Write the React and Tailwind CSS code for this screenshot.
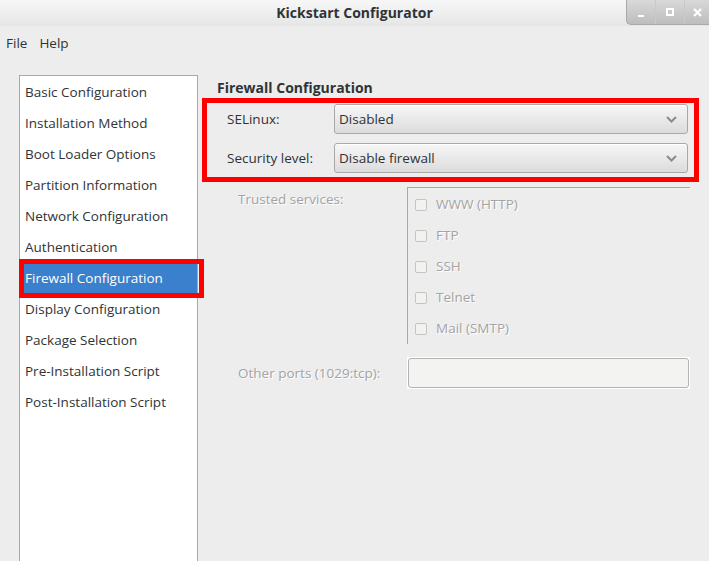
import { useState } from "react";

const sections = [
  "Basic Configuration",
  "Installation Method",
  "Boot Loader Options",
  "Partition Information",
  "Network Configuration",
  "Authentication",
  "Firewall Configuration",
  "Display Configuration",
  "Package Selection",
  "Pre-Installation Script",
  "Post-Installation Script",
];

const services = ["WWW (HTTP)", "FTP", "SSH", "Telnet", "Mail (SMTP)"];

const dim = "text-[#a3a3a3] [text-shadow:1px_1px_0_#ffffff]";

function Chevron() {
  return (
    <svg width="11" height="7" viewBox="0 0 11 7" className="shrink-0">
      <path d="M1 1l4.5 4.5L10 1" fill="none" stroke="#8b8b8b" strokeWidth="2" />
    </svg>
  );
}

function Combo({ value }) {
  return (
    <div className="flex items-center justify-between w-[354px] h-[30px] pl-[4px] pr-[10px] rounded-[3px] border border-[#a9a9a9] bg-gradient-to-b from-[#f7f7f7] to-[#dcdcdc] shadow-[inset_0_1px_0_#ffffff] text-[#2e3436]">
      <span>{value}</span>
      <Chevron />
    </div>
  );
}

function TitleBar() {
  return (
    <div className="relative h-[26px] flex items-center justify-center pb-[2px] bg-gradient-to-b from-[#f7f7f7] to-[#e6e6e6]">
      <span className="font-bold text-[#2e3436] text-[14px]">Kickstart Configurator</span>
      <div className="absolute right-0 top-0 flex h-[25px] rounded-bl-[5px] overflow-hidden bg-gradient-to-b from-[#d9d9d9] to-[#bdbdbd] border-l border-b border-[#a8a8a8]">
        <div className="w-[29px] flex items-end justify-center pb-[7px] border-r border-[#c9c9c9]">
          <span className="block w-[6px] h-[2px] bg-white" />
        </div>
        <div className="w-[29px] flex items-center justify-center border-r border-[#c9c9c9]">
          <span className="block w-[8px] h-[8px] border-2 border-white" />
        </div>
        <div className="w-[24px] flex items-center justify-center">
          <svg width="9" height="9" viewBox="0 0 9 9">
            <path d="M1 1l7 7M8 1L1 8" stroke="#ffffff" strokeWidth="2.2" />
          </svg>
        </div>
      </div>
    </div>
  );
}

export default function App() {
  const [active, setActive] = useState(6);
  const [ports, setPorts] = useState("");

  return (
    <div className="w-[709px] h-[561px] overflow-hidden bg-[#ededed] text-[13.5px] text-[#2e3436] font-['Open_Sans',sans-serif]">
      <TitleBar />

      <div className="h-[32px] flex items-center gap-[12px] pl-[6px] pt-[2px]">
        <span>File</span>
        <span>Help</span>
      </div>

      <div className="flex pt-[17px] pl-[19px]">
        {/* section list */}
        <ul className="w-[179px] h-[500px] shrink-0 bg-white border border-[#a9a9a9] pt-px">
          {sections.map((s, i) => (
            <li
              key={s}
              onClick={() => setActive(i)}
              className={
                "relative h-[31px] flex items-center pl-[5px] " +
                (i === active ? "bg-[#3b80cc] text-white" : "")
              }
            >
              {s}
              {i === active && (
                <span className="absolute -left-px -top-[4px] w-[185px] h-[39px] border-[5px] border-[#ff0000]" />
              )}
            </li>
          ))}
        </ul>

        {/* firewall panel */}
        <div className="ml-[4px] w-[497px] flex flex-col">
          <div className="h-[23px] flex items-center pl-[15px] pt-[2px] font-bold text-[14px]">Firewall Configuration</div>

          <div className="border-[5px] border-[#ff0000] pt-px pb-[4px] pr-[5px] flex flex-col gap-[9px]">
            <div className="flex items-center">
              <span className="w-[127px] pl-[20px]">SELinux:</span>
              <Combo value="Disabled" />
            </div>
            <div className="flex items-center">
              <span className="w-[127px] pl-[20px]">Security level:</span>
              <Combo value="Disable firewall" />
            </div>
          </div>

          <div className="flex mt-[5px]">
            <span className={"w-[205px] pl-[36px] pt-[2px] " + dim}>Trusted services:</span>
            <div className="w-[283px] border-l border-t border-[#a9a9a9] pt-px">
              {services.map((s) => (
                <label key={s} className="h-[31px] flex items-center gap-[9px] pl-[7px]">
                  <span className="block w-[12px] h-[12px] rounded-[2px] border border-[#c3c6bf] bg-[#f2f2f0]" />
                  <span className={dim}>{s}</span>
                </label>
              ))}
            </div>
          </div>

          <div className="flex items-center mt-[13px]">
            <span className={"w-[205px] pl-[36px] " + dim}>Other ports (1029:tcp):</span>
            <div className="w-[283px] h-[32px] p-px bg-white">
              <input
                value={ports}
                onChange={(e) => setPorts(e.target.value)}
                disabled
                className="w-full h-full rounded-[3px] border border-[#b2b2b2] bg-[#f3f3f1] outline-none px-[5px]"
              />
            </div>
          </div>
        </div>
      </div>
    </div>
  );
}
